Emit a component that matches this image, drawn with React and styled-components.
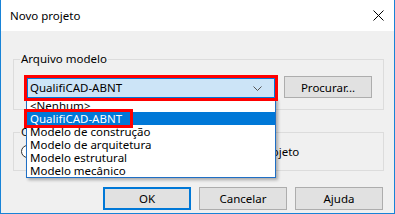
import React from 'react';
import styled, { createGlobalStyle } from 'styled-components';

const GlobalStyle = createGlobalStyle`
  html, body {
    margin: 0;
    padding: 0;
    background: #ffffff;
  }
  body {
    font-family: "Noto Sans", "Open Sans", sans-serif;
    font-size: 11.5px;
    color: #000;
  }
`;

const Window = styled.div`
  width: 395px;
  height: 214px;
  box-sizing: border-box;
  border: 1px solid #1883d7;
  border-top: none;
  display: flex;
  flex-direction: column;
  background: #f0f0f0;
`;

const TitleBar = styled.div`
  height: 31px;
  flex-shrink: 0;
  background: #ffffff;
  display: flex;
  align-items: center;
  justify-content: space-between;
  padding: 0 10px 0 9px;
`;

const Title = styled.span`
  font-size: 11.5px;
  line-height: 16px;
`;

const Body = styled.div`
  flex: 1;
  display: flex;
  flex-direction: column;
  padding: 10px 10px 0 12px;
`;

const GroupBox = styled.fieldset`
  margin: ${p => p.$mt}px 0 0;
  padding: ${p => p.$pad};
  border: 1px solid #dcdcdc;
  min-width: 0;
`;

const Legend = styled.legend`
  margin-left: ${p => p.$ml}px;
  padding: 0 1px;
  line-height: 16px;
  font-size: 11.5px;
`;

const Row = styled.div`
  display: flex;
  align-items: flex-start;
`;

const ComboWrap = styled.div`
  position: relative;
  margin-top: 2px;
  width: 248px;
`;

const Combo = styled.div`
  position: relative;
  z-index: 2;
  height: 20px;
  box-sizing: border-box;
  border: 1px solid #0078d7;
  background: #cce4f7;
  outline: 3px solid #ff0000;
  display: flex;
  align-items: center;
  justify-content: space-between;
  padding: 0 12px 0 2px;
  line-height: 16px;
`;

const DropList = styled.div`
  position: absolute;
  z-index: 1;
  top: 100%;
  left: -1px;
  width: 250px;
  box-sizing: border-box;
  border: 1px solid #1f6fc5;
  background: #ffffff;
  box-shadow: 2px 2px 3px rgba(0, 0, 0, 0.3);
`;

const Item = styled.div`
  height: 13px;
  line-height: 13px;
  padding-left: ${p => (p.$selected ? 0 : 3)}px;
  background: ${p => (p.$selected ? '#0078d7' : 'transparent')};
  color: ${p => (p.$selected ? '#ffffff' : '#000000')};
  white-space: nowrap;
`;

const Highlight = styled.span`
  display: inline-block;
  height: 13px;
  padding: 0 8px 0 3px;
  outline: 3px solid #ff0000;
`;

const Button = styled.button`
  width: 88px;
  height: ${p => p.$h}px;
  box-sizing: border-box;
  margin-left: ${p => p.$ml || 0}px;
  border: ${p => (p.$default ? '2px solid #0078d7' : '1px solid #adadad')};
  background: #e1e1e1;
  font-family: inherit;
  font-size: 11.5px;
  color: #000;
  padding: 0;
`;

const RadioRow = styled.div`
  display: flex;
  align-items: center;
  height: 16px;
  white-space: nowrap;
`;

const Radio = styled.span`
  width: 13px;
  height: 13px;
  box-sizing: border-box;
  border: 1px solid #333;
  border-radius: 50%;
  background: #fff;
  margin-right: 10px;
`;

const Footer = styled.div`
  margin-top: 16px;
  display: flex;
  justify-content: flex-end;
  gap: 8px;
  padding-right: 1px;
`;

const items = [
  '<Nenhum>',
  'QualifiCAD-ABNT',
  'Modelo de construção',
  'Modelo de arquitetura',
  'Modelo estrutural',
  'Modelo mecânico',
];

export default function App() {
  return (
    <>
      <GlobalStyle />
      <Window>
        <TitleBar>
          <Title>Novo projeto</Title>
          <svg width="11" height="11" viewBox="0 0 11 11">
            <path d="M0.5 0.5 L10.5 10.5 M10.5 0.5 L0.5 10.5" stroke="#000" strokeWidth="1" fill="none" />
          </svg>
        </TitleBar>
        <Body>
          <GroupBox $mt={10} $pad="9px 10px 11px 13px">
            <Legend $ml={-7}>Arquivo modelo</Legend>
            <Row>
              <ComboWrap>
                <Combo>
                  <span>QualifiCAD-ABNT</span>
                  <svg width="9" height="5" viewBox="0 0 9 5">
                    <path d="M0.5 0.5 L4.5 4.5 L8.5 0.5" stroke="#555" strokeWidth="1" fill="none" />
                  </svg>
                </Combo>
                <DropList>
                  {items.map((t, i) =>
                    i === 1 ? (
                      <Item key={t} $selected>
                        <Highlight>{t}</Highlight>
                      </Item>
                    ) : (
                      <Item key={t}>{t}</Item>
                    )
                  )}
                </DropList>
              </ComboWrap>
              <Button $h={22} $ml={9}>Procurar...</Button>
            </Row>
          </GroupBox>
          <GroupBox $mt={14} $pad="3px 10px 11px 7px">
            <Legend $ml={-1}>Configurações</Legend>
            <RadioRow>
              <Radio />
              <span>Copiar configurações do modelo para o projeto</span>
            </RadioRow>
          </GroupBox>
          <Footer>
            <Button $h={23} $default>OK</Button>
            <Button $h={23}>Cancelar</Button>
            <Button $h={23}>Ajuda</Button>
          </Footer>
        </Body>
      </Window>
    </>
  );
}
